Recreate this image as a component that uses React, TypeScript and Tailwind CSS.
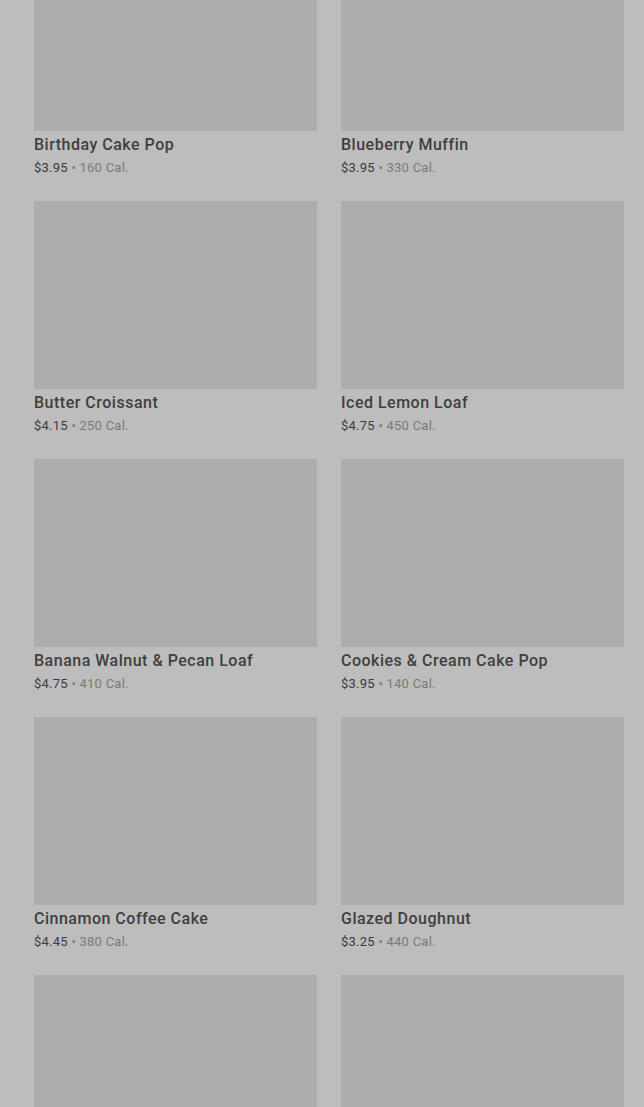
import React from 'react';

const items = [
  { name: 'Birthday Cake Pop', price: '$3.95', cal: '160 Cal.' },
  { name: 'Blueberry Muffin', price: '$3.95', cal: '330 Cal.' },
  { name: 'Butter Croissant', price: '$4.15', cal: '250 Cal.' },
  { name: 'Iced Lemon Loaf', price: '$4.75', cal: '450 Cal.' },
  { name: 'Banana Walnut & Pecan Loaf', price: '$4.75', cal: '410 Cal.' },
  { name: 'Cookies & Cream Cake Pop', price: '$3.95', cal: '140 Cal.' },
  { name: 'Cinnamon Coffee Cake', price: '$4.45', cal: '380 Cal.' },
  { name: 'Glazed Doughnut', price: '$3.25', cal: '440 Cal.' },
  { name: 'Chocolate Croissant', price: '$4.45', cal: '300 Cal.' },
  { name: 'Plain Bagel', price: '$2.95', cal: '280 Cal.' },
];

const App = () => {
  return (
    <div className="h-screen overflow-hidden bg-[#bdbdbd] font-['Roboto',sans-serif]">
      <div className="-mt-[57px] grid grid-cols-2 gap-x-[24px] pl-[34px] pr-[20px]">
        {items.map((item, index) => (
          <div key={index} className="flex flex-col pb-[23px]">
            <div className="h-[188px] bg-[#adadad]" />
            <h3 className="pt-[1px] text-[16px] leading-[25px] font-medium tracking-[0.5px] text-[#3f3f3f]">
              {item.name}
            </h3>
            <p className="text-[13px] leading-[21px] tracking-[0.25px] text-[#3b3b3b]">
              {item.price}
              <span className="text-[#7a7a7a]"> • {item.cal}</span>
            </p>
          </div>
        ))}
      </div>
    </div>
  );
};

export default App;
